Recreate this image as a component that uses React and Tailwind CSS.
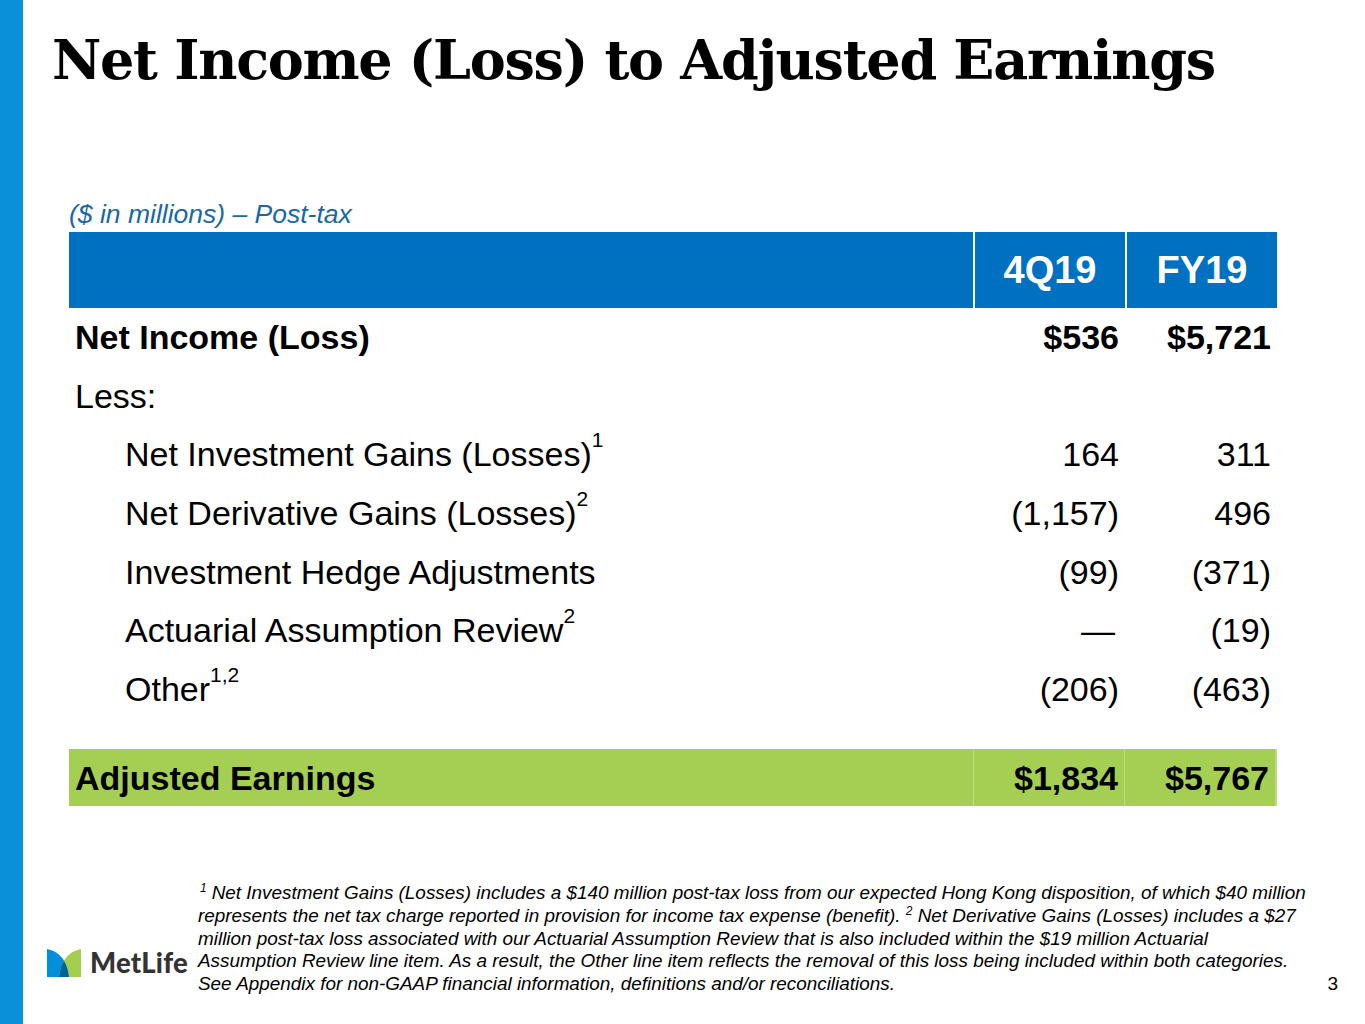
const rows = [
  { label: "Net Income (Loss)", q: "$536", fy: "$5,721", bold: true },
  { label: "Less:", q: "", fy: "" },
  { label: "Net Investment Gains (Losses)", sup: "1", q: "164", fy: "311", indent: true },
  { label: "Net Derivative Gains (Losses)", sup: "2", q: "(1,157)", fy: "496", indent: true },
  { label: "Investment Hedge Adjustments", q: "(99)", fy: "(371)", indent: true },
  { label: "Actuarial Assumption Review", sup: "2", q: "—", fy: "(19)", indent: true, dash: true },
  { label: "Other", sup: "1,2", q: "(206)", fy: "(463)", indent: true },
];

const footnoteLines = [
  <>
    <sup className="-top-[7px] text-[12px] mr-[5px] ml-[2px]">1</sup>Net Investment Gains (Losses) includes a $140 million post-tax loss from our expected Hong Kong disposition, of which $40 million
  </>,
  <>
    represents the net tax charge reported in provision for income tax expense (benefit).{" "}
    <sup className="-top-[7px] text-[12px]">2</sup> Net Derivative Gains (Losses) includes a $27
  </>,
  <>million post-tax loss associated with our Actuarial Assumption Review that is also included within the $19 million Actuarial</>,
  <>Assumption Review line item. As a result, the Other line item reflects the removal of this loss being included within both categories.</>,
  <>See Appendix for non-GAAP financial information, definitions and/or reconciliations.</>,
];

function MetLifeLogo() {
  return (
    <div className="flex items-center gap-[9px]">
      <svg width="34" height="28" viewBox="0 0 34 28">
        <path d="M0 0 C10 2 20 9 22 28 L0 28 Z" fill="#0090da" />
        <path d="M34 0 C24 2 14 9 12 28 L34 28 Z" fill="#a4ce4e" />
        <path d="M12 28 C13 20 15 15 17 12 C19 15 21 20 22 28 Z" fill="#0061a0" />
      </svg>
      <span
        className="text-[27.5px] font-black leading-none tracking-[0.2px] text-[#333333]"
        style={{ fontFamily: "Lato, 'Liberation Sans', sans-serif" }}
      >
        MetLife
      </span>
    </div>
  );
}

export default function App() {
  return (
    <div
      className="flex h-[1024px] w-[1365px] overflow-hidden bg-white text-black"
      style={{ fontFamily: "'Liberation Sans', Arial, sans-serif" }}
    >
      <div className="w-[23px] shrink-0 bg-[#0a90d9]" />

      <div className="flex min-w-0 flex-1 flex-col">
        <h1
          className="ml-[29px] mt-[33px] text-[54px] font-bold leading-none tracking-[-1.3px] whitespace-nowrap"
          style={{ fontFamily: "'DejaVu Serif', 'Liberation Serif', serif" }}
        >
          Net Income (Loss) to Adjusted Earnings
        </h1>

        <div className="ml-[46px] mt-[113px] text-[26.5px] italic leading-[28px] text-[#1a66aa]">
          ($ in millions) – Post-tax
        </div>

        <div className="ml-[46px] mt-[4px] w-[1208px]">
          <div className="grid h-[76px] grid-cols-[904px_150px_150px] gap-x-[2px] text-[38px] font-bold text-white">
            <div className="bg-[#0070c0]" />
            <div className="flex items-center justify-center bg-[#0070c0]">4Q19</div>
            <div className="flex items-center justify-center bg-[#0070c0]">FY19</div>
          </div>

          {rows.map((row, i) => (
            <div
              key={i}
              className={`grid h-[58.6px] grid-cols-[904px_150px_150px] gap-x-[2px] text-[34px] leading-none ${
                row.bold ? "font-bold" : ""
              }`}
            >
              <div className={`flex items-center whitespace-nowrap ${row.indent ? "pl-[56px]" : "pl-[6px]"}`}>
                <span>
                  {row.label}
                  {row.sup ? <sup className="-top-[19px] text-[21px] font-normal">{row.sup}</sup> : null}
                </span>
              </div>
              <div className={`flex items-center justify-end ${row.dash ? "pr-[10px]" : "pr-[6px]"}`}>{row.q}</div>
              <div className="flex items-center justify-end pr-[6px]">{row.fy}</div>
            </div>
          ))}

          <div className="mt-[31px] grid h-[57px] grid-cols-[904px_150px_150px] gap-x-[1px] bg-[#bcdc85] text-[34px] font-bold leading-none">
            <div className="flex items-center bg-[#a4cf52] pl-[6px]">Adjusted Earnings</div>
            <div className="flex items-center justify-end bg-[#a4cf52] pr-[6px]">$1,834</div>
            <div className="flex items-center justify-end bg-[#a4cf52] pr-[6px]">$5,767</div>
          </div>
        </div>

        <div className="mt-[76px] flex items-end">
          <div className="mb-[19px] ml-[24px] w-[151px] shrink-0">
            <MetLifeLogo />
          </div>
          <div className="text-[18.9px] italic leading-[22.75px]">
            {footnoteLines.map((line, i) => (
              <div key={i} className="whitespace-nowrap">
                {line}
              </div>
            ))}
          </div>
          <div className="ml-auto mr-[27px] text-[19px] leading-[22.75px]">3</div>
        </div>
      </div>
    </div>
  );
}
